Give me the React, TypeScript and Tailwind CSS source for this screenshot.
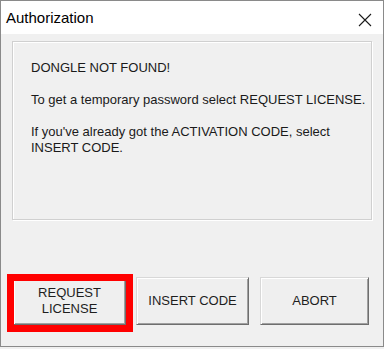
export default function App() {
  const font = { fontFamily: '"Liberation Sans", Arial, sans-serif' };
  const btn =
    "flex h-[48px] flex-col items-center justify-center border border-t-[#d8d8d8] border-l-[#d8d8d8] border-r-[#6e6e6e] border-b-[#6e6e6e] bg-[#efefef] text-[13px] leading-[16px] text-[#1e1e1e] shadow-[inset_1px_1px_0_#ffffff,inset_-1px_-1px_0_#a0a0a0]";

  return (
    <div className="h-[349px] w-[384px] bg-[#f0f0f0]" style={font}>
      <div className="flex h-[347px] w-[384px] flex-col border border-[#8a8a8a] bg-[#f0f0f0]">
        {/* title bar */}
        <div className="flex h-[33px] items-center justify-between bg-white pl-[5px] pr-[11px]">
          <span className="text-[15px] leading-none text-black">Authorization</span>
          <svg width="14" height="14" viewBox="0 0 14 14" className="mt-[4px]">
            <path d="M1 1 L13 13 M13 1 L1 13" stroke="#1a1a1a" strokeWidth="1.1" />
          </svg>
        </div>

        {/* message group */}
        <div className="ml-[11px] mt-[7px] h-[179px] w-[360px] border border-[#d0d0d0] pl-[18px] pt-[18px] shadow-[1px_1px_0_#ffffff,inset_1px_1px_0_#ffffff]">
          <div className="whitespace-nowrap text-[13px] leading-[16px] text-[#1a1a1a]">
            <p>DONGLE NOT FOUND!</p>
            <p className="mt-[16px]">To get a temporary password select REQUEST LICENSE.</p>
            <p className="mt-[16px]">
              If you've already got the ACTIVATION CODE, select
              <br />
              INSERT CODE.
            </p>
          </div>
        </div>

        {/* buttons */}
        <div className="mt-[57px] flex pl-[12px]">
          <div className="relative">
            <button className={`${btn} w-[113px]`}>
              <span>REQUEST</span>
              <span>LICENSE</span>
            </button>
            <div className="pointer-events-none absolute left-[-6px] top-[-3px] h-[58px] w-[126px] border-[7px] border-[#ff0000]" />
          </div>
          <button className={`${btn} ml-[10px] w-[113px]`}>INSERT CODE</button>
          <button className={`${btn} ml-[11px] w-[109px]`}>ABORT</button>
        </div>
      </div>
    </div>
  );
}
